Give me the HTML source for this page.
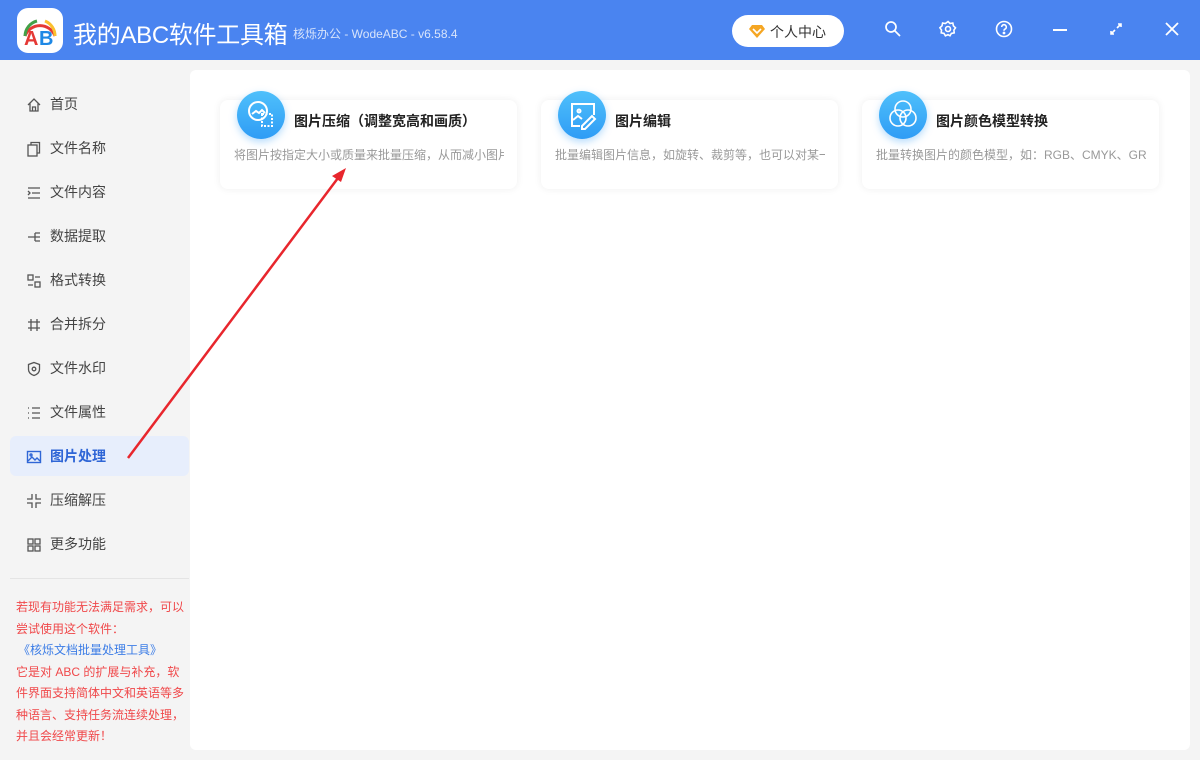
<!DOCTYPE html><html><head><meta charset="utf-8"><style>
*{margin:0;padding:0;box-sizing:border-box}
body{width:1200px;height:760px;background:#f4f4f4;font-family:"Liberation Sans","Noto Sans CJK SC",sans-serif;position:relative;overflow:hidden}
.top{position:absolute;left:0;top:0;width:1200px;height:60px;background:#4a84f0}
.logo{position:absolute;left:17px;top:8px;width:46px;height:45px;background:#fff;border-radius:11px}
.title{position:absolute;left:73px;top:15px;color:#fff;font-size:24px;font-weight:normal;letter-spacing:-0.3px}
.ver{position:absolute;left:293px;top:25px;color:#d8e4fb;font-size:12px}
.pc{position:absolute;left:732px;top:15px;width:112px;height:32px;background:#fff;border-radius:16px;font-size:14px;color:#333}
.side{position:absolute;left:0;top:60px;width:190px;height:700px}
.mi{position:absolute;left:10px;width:179px;height:40px;font-size:14px;color:#444;line-height:40px;padding-left:40px}
.mi svg{position:absolute;left:16px;top:13px}
.mi.a{background:#e7eefc;color:#2f66d6;font-weight:bold;border-radius:6px}
.panel{position:absolute;left:190px;top:70px;width:1000px;height:680px;background:#fff;border-radius:6px}
.card{position:absolute;top:100px;width:297px;height:89px;background:#fff;border-radius:8px;box-shadow:0 0 8px rgba(0,0,0,.07)}
.ic{position:absolute;left:17px;top:-9px;width:48px;height:48px;border-radius:50%;background:linear-gradient(#4fc0fb,#2f9cf5);box-shadow:0 3px 8px rgba(47,156,245,.35)}
.ct{position:absolute;left:74px;top:11px;font-size:14px;font-weight:bold;color:#222}
.cd{position:absolute;left:14px;top:46px;width:270px;font-size:12px;color:#999;white-space:nowrap;overflow:hidden}
.note{position:absolute;left:16px;top:597px;width:172px;font-size:12px;line-height:21.5px;color:#f0484a}
.note a{color:#3c7de6;text-decoration:none;padding-left:2px}
.ti{position:absolute;top:20px}
</style></head><body>
<div class="top">
<div class="logo"><svg width="46" height="45" viewBox="0 0 46 45"><path d="M8 28 A16 16 0 0 1 38 28" fill="none" stroke="#e53935" stroke-width="3"/><path d="M8 28 A16 16 0 0 1 20 13" fill="none" stroke="#43a047" stroke-width="3"/><path d="M28 13 A16 16 0 0 1 38 28" fill="none" stroke="#fbc02d" stroke-width="3"/><text x="7" y="37" font-size="20" font-weight="bold" fill="#e53935" font-family="Liberation Sans">A</text><text x="22" y="37" font-size="20" font-weight="bold" fill="#1e88e5" font-family="Liberation Sans">B</text></svg></div>
<div class="title">我的ABC软件工具箱</div>
<div class="ver">核烁办公 - WodeABC - v6.58.4</div>
<div class="pc"><svg style="position:absolute;left:17px;top:9px" width="16" height="14" viewBox="0 0 16 14"><path d="M3 1h10l3 4-8 9-8-9z" fill="#f5a623"/><path d="M4 5l4 4 4-4" fill="none" stroke="#fff" stroke-width="1.6"/></svg><span style="position:absolute;left:38px;top:7px">个人中心</span></div>
<svg class="ti" style="left:884px" width="18" height="18" viewBox="0 0 18 18" fill="none" stroke="#fff" stroke-width="1.7"><circle cx="7" cy="7" r="5"/><path d="M11 11l5 5"/></svg>
<svg class="ti" style="left:939px" width="18" height="18" viewBox="0 0 18 18" fill="none" stroke="#fff" stroke-width="1.6"><circle cx="9" cy="9" r="2.5"/><path d="M9 1.5l2 2 2.8-.5.6 2.8 2.1 2-1.6 2.3.3 2.8-2.8.5-1.4 2.4L9 14.6l-2.6 1.2-1.4-2.4-2.8-.5.3-2.8L.9 7.8l2.1-2 .6-2.8 2.8.5z"/></svg>
<svg class="ti" style="left:995px" width="18" height="18" viewBox="0 0 18 18" fill="none" stroke="#fff" stroke-width="1.6"><circle cx="9" cy="9" r="7.5"/><path d="M6.7 7a2.3 2.3 0 1 1 3 2.2c-.6.3-.7.7-.7 1.5"/><circle cx="9" cy="13" r=".6" fill="#fff"/></svg>
<div style="position:absolute;left:1053px;top:29px;width:14px;height:2px;background:#fff"></div>
<svg class="ti" style="left:1108px" width="16" height="18" viewBox="0 0 16 18" fill="none" stroke="#fff" stroke-width="1.6"><path d="M3 14l4-4M9 8l4-4M10 4h3v3M3 11v3h3"/></svg>
<svg class="ti" style="left:1164px" width="16" height="18" viewBox="0 0 16 18" fill="none" stroke="#fff" stroke-width="1.8"><path d="M2 3l12 12M14 3L2 15"/></svg>
</div>
<div class="side">
<div class="mi" style="top:24px"><svg width="16" height="16" viewBox="0 0 16 16" fill="none" stroke="#555" stroke-width="1.3"><path d="M2 8l6-6 6 6M4 6.5V14h8V6.5M6.5 14v-4h3v4"/></svg>首页</div>
<div class="mi" style="top:68px"><svg width="16" height="16" viewBox="0 0 16 16" fill="none" stroke="#555" stroke-width="1.3"><rect x="2" y="4" width="9" height="11"/><path d="M5 4V1.5h8.5V12H11"/></svg>文件名称</div>
<div class="mi" style="top:112px"><svg width="16" height="16" viewBox="0 0 16 16" fill="none" stroke="#555" stroke-width="1.3"><path d="M2 3h12M6 8h8M2 13h12M2 6l2 2-2 2"/></svg>文件内容</div>
<div class="mi" style="top:156px"><svg width="16" height="16" viewBox="0 0 16 16" fill="none" stroke="#555" stroke-width="1.3"><path d="M2 8h12M9 4h5M9 12h5M9 4v8"/></svg>数据提取</div>
<div class="mi" style="top:200px"><svg width="16" height="16" viewBox="0 0 16 16" fill="none" stroke="#555" stroke-width="1.3"><rect x="2" y="2" width="5" height="5"/><rect x="9" y="9" width="5" height="5"/><path d="M9 4h5M2 12h5"/></svg>格式转换</div>
<div class="mi" style="top:244px"><svg width="16" height="16" viewBox="0 0 16 16" fill="none" stroke="#555" stroke-width="1.3"><path d="M5 2v12M11 2v12M2 5h12M2 11h12"/></svg>合并拆分</div>
<div class="mi" style="top:288px"><svg width="16" height="16" viewBox="0 0 16 16" fill="none" stroke="#555" stroke-width="1.3"><path d="M8 1.5l5.5 2v5c0 3-2.5 5-5.5 6-3-1-5.5-3-5.5-6v-5z"/><circle cx="8" cy="8" r="1.8"/></svg>文件水印</div>
<div class="mi" style="top:332px"><svg width="16" height="16" viewBox="0 0 16 16" fill="none" stroke="#555" stroke-width="1.3"><path d="M2 3h1M2 8h1M2 13h1M6 3h8M6 8h8M6 13h8"/></svg>文件属性</div>
<div class="mi a" style="top:376px"><svg width="16" height="16" viewBox="0 0 16 16" fill="none" stroke="#2f66d6" stroke-width="1.4"><rect x="1.5" y="2.5" width="13" height="11"/><path d="M2 12l4-4 3 3 2-2 3 3"/><circle cx="5" cy="6" r="1"/></svg>图片处理</div>
<div class="mi" style="top:420px"><svg width="16" height="16" viewBox="0 0 16 16" fill="none" stroke="#555" stroke-width="1.3"><path d="M6 1v5H1M10 1v5h5M6 15v-5H1M10 15v-5h5"/></svg>压缩解压</div>
<div class="mi" style="top:464px"><svg width="16" height="16" viewBox="0 0 16 16" fill="none" stroke="#555" stroke-width="1.3"><rect x="2" y="2" width="5" height="5"/><rect x="9" y="2" width="5" height="5"/><rect x="2" y="9" width="5" height="5"/><rect x="9" y="9" width="5" height="5"/></svg>更多功能</div>
<div style="position:absolute;left:10px;top:518px;width:179px;height:1px;background:#e4e4e4"></div>
</div>
<div class="note">若现有功能无法满足需求，可以尝试使用这个软件：<br><a>《核烁文档批量处理工具》</a><br>它是对 ABC 的扩展与补充，软件界面支持简体中文和英语等多种语言、支持任务流连续处理，并且会经常更新！</div>
<div class="panel"></div>
<div class="card" style="left:220px"><div class="ic"><svg width="48" height="48" viewBox="0 0 48 48" fill="none" stroke="#fff" stroke-width="2"><circle cx="21" cy="20" r="9"/><path d="M15 23l4-3 3 2 3-3 3 3"/><rect x="25" y="23" width="10" height="12" stroke-dasharray="2 1.5"/></svg></div><div class="ct">图片压缩（调整宽高和画质）</div><div class="cd">将图片按指定大小或质量来批量压缩，从而减小图片</div></div>
<div class="card" style="left:541px"><div class="ic"><svg width="48" height="48" viewBox="0 0 48 48" fill="none" stroke="#fff" stroke-width="2"><path d="M22 35h-8V13h22v11"/><circle cx="21" cy="20" r="1.5"/><path d="M15 29l5-4 4 3"/><path d="M24 35l10-10 3 3-10 10h-3z"/></svg></div><div class="ct">图片编辑</div><div class="cd">批量编辑图片信息，如旋转、裁剪等，也可以对某一</div></div>
<div class="card" style="left:862px"><div class="ic"><svg width="48" height="48" viewBox="0 0 48 48" fill="none" stroke="#fff" stroke-width="1.6"><circle cx="24" cy="18" r="8"/><circle cx="19" cy="27" r="8"/><circle cx="29" cy="27" r="8"/></svg></div><div class="ct">图片颜色模型转换</div><div class="cd">批量转换图片的颜色模型，如：RGB、CMYK、GRAY</div></div>
<svg style="position:absolute;left:0;top:0" width="1200" height="760"><line x1="128" y1="458" x2="338" y2="178" stroke="#e8262d" stroke-width="2.5"/><path d="M346 168l-14 8 9 6z" fill="#e8262d"/></svg>
</body></html>
